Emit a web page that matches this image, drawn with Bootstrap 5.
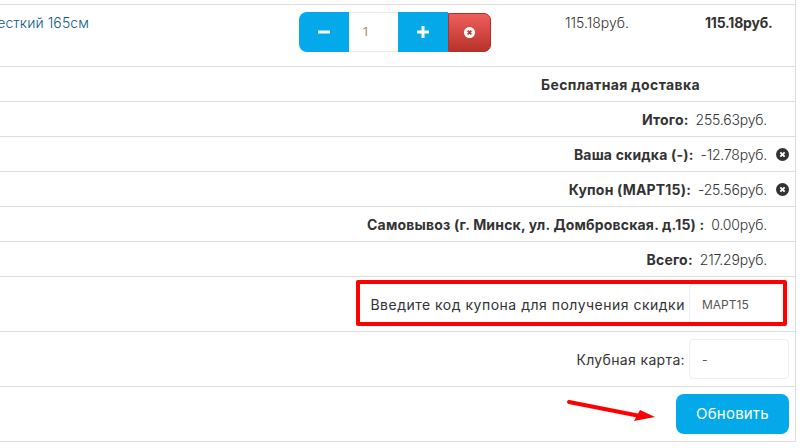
<!DOCTYPE html>
<html lang="ru">
<head>
  <meta charset="UTF-8">
  <title>Корзина</title>
  <link href="https://cdn.jsdelivr.net/npm/bootstrap@5.3.0/dist/css/bootstrap.min.css" rel="stylesheet">
  <style>
    html, body { overflow: hidden; }
    body {
      font-family: Inter, "Open Sans", sans-serif;
      font-size: 14px;
      color: #333;
      background: #fff;
    }
    .cart-wrap {
      position: relative;
      width: 796px;
      height: 442px;
      padding-top: 4px;
      border-right: 1px solid #ddd;
    }
    .cart-table { table-layout: fixed; width: 795px; border-top: 1px solid #ddd; }
    .cart-table td {
      padding: 0;
      border-bottom: 1px solid #ddd;
      color: #333;
      box-shadow: none;
    }
    .row-item td { height: 62px; vertical-align: top; padding-top: 7px; }
    .row-sum td { height: 35px; vertical-align: middle; }
    .row-field td { height: 55px; vertical-align: middle; }
    .item-name {
      display: flex;
      justify-content: flex-end;
      overflow: hidden;
      white-space: nowrap;
      width: 89px;
    }
    .item-name a { color: #0b5a8a; text-decoration: none; font-weight: 300; letter-spacing: .1px; }
    .price-cell { padding-left: 24px !important; letter-spacing: -.2px; }
    .price-light { font-weight: 300; letter-spacing: 0; }
    .amount { font-weight: 300; letter-spacing: -.2px; }
    .title-cell { letter-spacing: .37px; }
    .qty-group { display: flex; align-items: stretch; height: 40px; margin-left: 1px; }
    .qty-btn {
      width: 50px;
      border: 0;
      padding: 0;
      background: #03a9e9;
      display: flex;
      align-items: center;
      justify-content: center;
    }
    .qty-btn.first { border-radius: 8px 0 0 8px; }
    .qty-input {
      width: 49px;
      border: 0;
      border-top: 1px solid #e8e8e8;
      border-bottom: 1px solid #e8e8e8;
      text-align: left;
      color: #b08a4a;
      font-size: 12px;
      outline: 0;
      padding: 0 0 0 14px;
    }
    .qty-del {
      width: 43px;
      margin-top: 1px;
      border: 1px solid #b5302a;
      border-radius: 0 7px 7px 0;
      background: linear-gradient(#ee5f5b, #b8322a);
      padding: 0;
      display: flex;
      align-items: center;
      justify-content: center;
    }
    .sum-line { display: flex; justify-content: flex-end; align-items: center; padding-right: 6px; }
    .sum-line b { font-weight: 700; margin-right: 7px; letter-spacing: .18px; }
    .sum-slot { width: 13px; height: 13px; margin-left: 9px; display: flex; }
    .field-line { display: flex; justify-content: flex-end; align-items: center; padding-right: 6px; gap: 4px; }
    .field-label { letter-spacing: .5px; }
    .field-label.short { letter-spacing: .35px; }
    .field-input {
      width: 100px;
      height: 40px;
      border: 1px solid #eee;
      border-radius: 4px;
      padding: 0 12px;
      font-size: 12px;
      color: #555;
      outline: 0;
    }
    .btn-update {
      width: 113px;
      height: 40px;
      background: #03a9e9;
      border: 0;
      border-radius: 8px;
      color: #fff;
      font-size: 15px;
      letter-spacing: .2px;
      padding: 0;
    }
    .mark-box {
      position: absolute;
      left: 356px;
      top: 280px;
      width: 431px;
      height: 46px;
      border: 4px solid #f00;
      border-radius: 2px;
      pointer-events: none;
    }
    .mark-arrow { position: absolute; left: 560px; top: 392px; pointer-events: none; }
  </style>
</head>
<body>
  <div class="cart-wrap">
    <table class="table mb-0 cart-table">
      <colgroup>
        <col style="width:298px">
        <col style="width:243px">
        <col style="width:140px">
        <col style="width:114px">
      </colgroup>
      <tbody>
        <tr class="row-item">
          <td><div class="item-name"><a href="#">Матрас жесткий 165см</a></div></td>
          <td>
            <div class="qty-group">
              <button class="qty-btn first" type="button" aria-label="Меньше">
                <svg width="12" height="12" viewBox="0 0 12 12"><rect y="4.5" width="12" height="3" fill="#fff"/></svg>
              </button>
              <input class="qty-input" value="1">
              <button class="qty-btn" type="button" aria-label="Больше">
                <svg width="12" height="12" viewBox="0 0 12 12"><path d="M4.5 0h3v4.5H12v3H7.5V12h-3V7.5H0v-3h4.5z" fill="#fff"/></svg>
              </button>
              <button class="qty-del" type="button" aria-label="Удалить">
                <svg width="11" height="11" viewBox="0 0 12 12"><circle cx="6" cy="6" r="6" fill="#fff"/><path d="M4 4l4 4M8 4l-4 4" stroke="#c0392f" stroke-width="2"/></svg>
              </button>
            </div>
          </td>
          <td class="price-cell price-light">115.18руб.</td>
          <td class="price-cell fw-bold">115.18руб.</td>
        </tr>
        <tr class="row-sum">
          <td colspan="2"></td>
          <td colspan="2" class="fw-bold title-cell">Бесплатная доставка</td>
        </tr>
        <tr class="row-sum">
          <td colspan="4"><div class="sum-line"><b>Итого:</b><span class="amount">255.63руб.</span><span class="sum-slot"></span></div></td>
        </tr>
        <tr class="row-sum">
          <td colspan="4"><div class="sum-line"><b>Ваша скидка (-):</b><span class="amount">-12.78руб.</span><span class="sum-slot">
            <svg width="13" height="13" viewBox="0 0 12 12"><circle cx="6" cy="6" r="6" fill="#333"/><path d="M4 4l4 4M8 4l-4 4" stroke="#fff" stroke-width="1.8"/></svg>
          </span></div></td>
        </tr>
        <tr class="row-sum">
          <td colspan="4"><div class="sum-line"><b>Купон (МАРТ15):</b><span class="amount">-25.56руб.</span><span class="sum-slot">
            <svg width="13" height="13" viewBox="0 0 12 12"><circle cx="6" cy="6" r="6" fill="#333"/><path d="M4 4l4 4M8 4l-4 4" stroke="#fff" stroke-width="1.8"/></svg>
          </span></div></td>
        </tr>
        <tr class="row-sum">
          <td colspan="4"><div class="sum-line"><b>Самовывоз (г. Минск, ул. Домбровская. д.15) :</b><span class="amount">0.00руб.</span><span class="sum-slot"></span></div></td>
        </tr>
        <tr class="row-sum">
          <td colspan="4"><div class="sum-line"><b>Всего:</b><span class="amount">217.29руб.</span><span class="sum-slot"></span></div></td>
        </tr>
        <tr class="row-field">
          <td colspan="4"><div class="field-line"><span class="field-label">Введите код купона для получения скидки</span><input class="field-input" value="МАРТ15"></div></td>
        </tr>
        <tr class="row-field">
          <td colspan="4"><div class="field-line"><span class="field-label short">Клубная карта:</span><input class="field-input" value="-"></div></td>
        </tr>
        <tr class="row-field">
          <td colspan="4"><div class="field-line"><button class="btn-update" type="button">Обновить</button></div></td>
        </tr>
      </tbody>
    </table>
    <div class="mark-box"></div>
    <svg class="mark-arrow" width="100" height="34" viewBox="0 0 100 34">
      <path d="M9 10L80 24" stroke="#f00" stroke-width="4" stroke-linecap="round"/>
      <path d="M95 25L74 29L80 18z" fill="#f00"/>
    </svg>
  </div>
  <script src="https://cdn.jsdelivr.net/npm/bootstrap@5.3.0/dist/js/bootstrap.bundle.min.js"></script>
</body>
</html>
